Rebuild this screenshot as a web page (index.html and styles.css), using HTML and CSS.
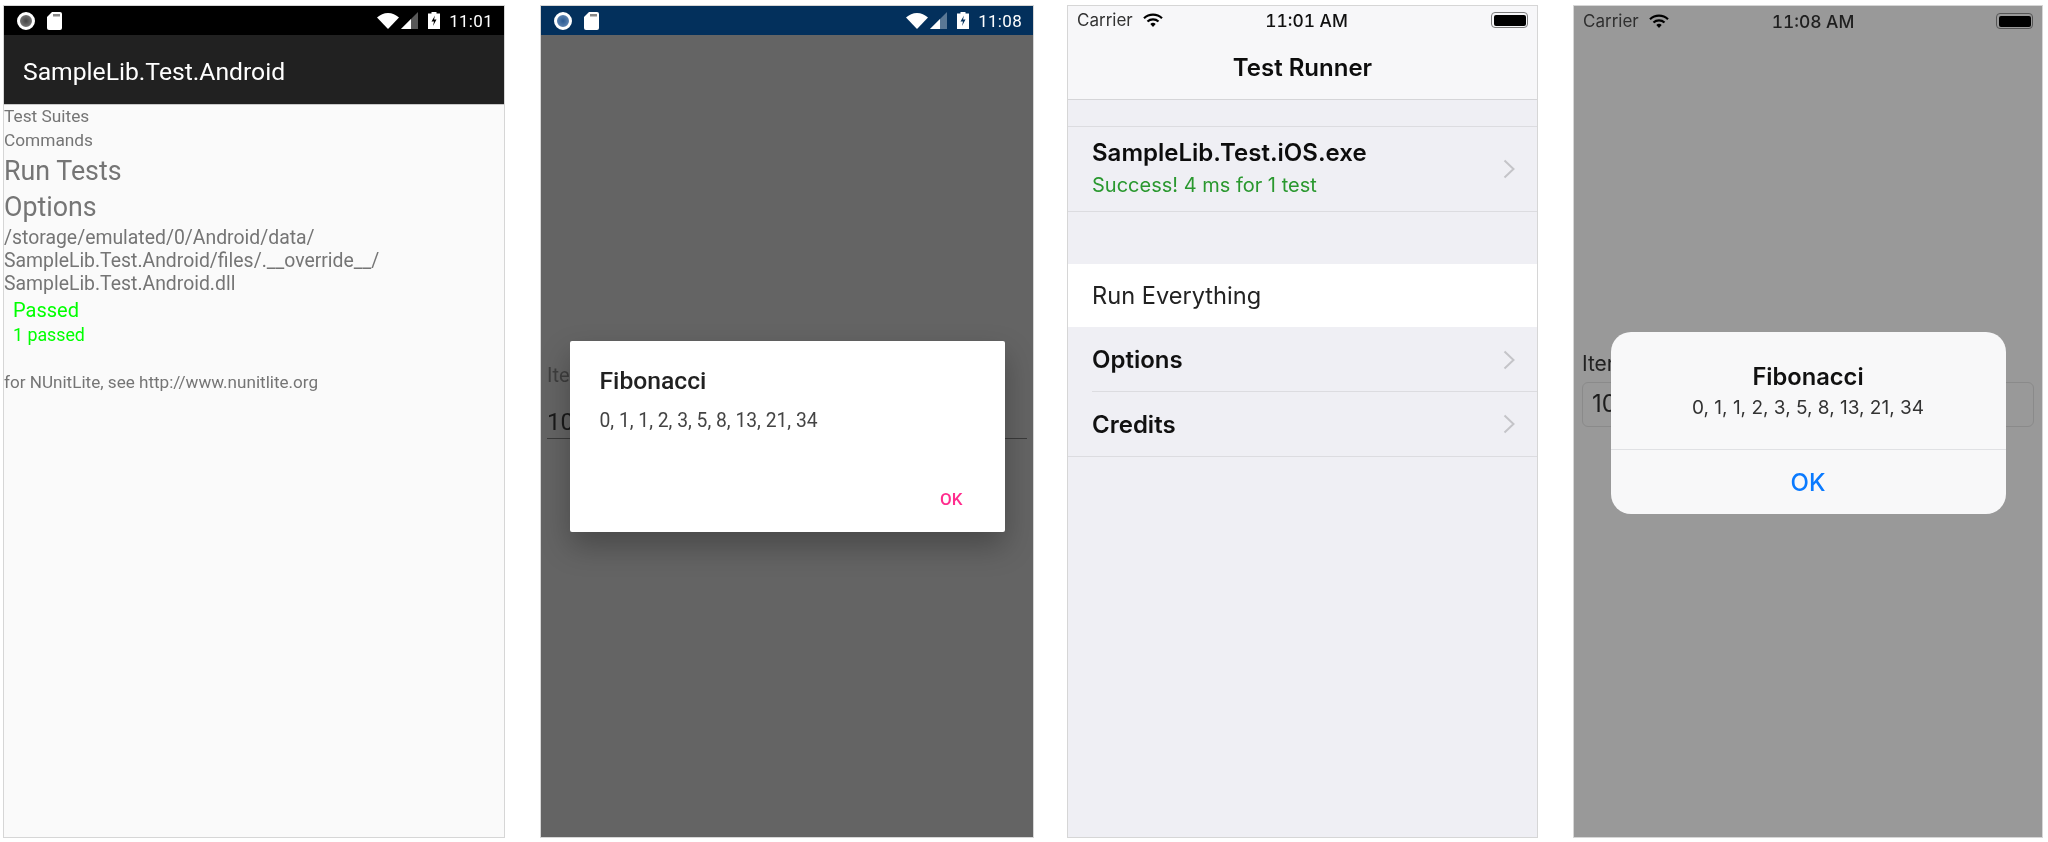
FILE: index.html
```html
<!DOCTYPE html>
<html lang="en">
<head>
<meta charset="utf-8">
<title>SampleLib test runners</title>
<link rel="stylesheet" href="styles.css">
</head>
<body>
<svg class="defs" width="0" height="0" aria-hidden="true">
  <symbol id="sd" viewBox="0 0 15 18"><path d="M5 0h8a2 2 0 0 1 2 2v14a2 2 0 0 1-2 2H2a2 2 0 0 1-2-2V5z" fill="#fff"/><rect x="6" y="2" width="7" height="2.5" fill="#888"/></symbol>
  <symbol id="wifi" viewBox="0 0 22 16"><path d="M0 4.500C3 1.800 7 0 11 0s8 1.800 11 4.500L11 16z" fill="#fff"/></symbol>
  <symbol id="signal" viewBox="0 0 17 17"><path d="M17 0v17H0z" fill="#fff" fill-opacity=".35"/><path d="M10 7v10H0z" fill="#fff"/></symbol>
  <symbol id="batt" viewBox="0 0 12 17"><path d="M3.500 0h5v1.500H12V17H0V1.500h3.500z" fill="#fff"/><path d="M7 3.500 3.500 9.500H6L5 14l3.500-6.500H6z" fill="currentColor"/></symbol>
  <symbol id="ioswifi" viewBox="0 0 20 14"><path d="M1 5.200a13 13 0 0 1 18 0" fill="none" stroke="currentColor" stroke-width="2.200"/><path d="M4.500 8.500a8 8 0 0 1 11 0" fill="none" stroke="currentColor" stroke-width="2.200"/><path d="M7.300 11a4 4 0 0 1 5.400 0L10 14z" fill="currentColor"/></symbol>
  <symbol id="chev" viewBox="0 0 12 20"><path d="M1.500 1.500 10.500 10l-9 8.500" fill="none" stroke="#c4c4c8" stroke-width="2"/></symbol>
</svg>

<main class="board">
  <section class="panel p1">
    <div class="dstatus black">
      <span class="rec grey"></span>
      <svg class="i-sd"><use href="#sd"/></svg>
      <span class="fill"></span>
      <svg class="i-wifi"><use href="#wifi"/></svg>
      <svg class="i-signal"><use href="#signal"/></svg>
      <svg class="i-batt"><use href="#batt"/></svg>
      <span class="dtime">11:01</span>
    </div>
    <header class="toolbar">SampleLib.Test.Android</header>
    <div class="log">
      <div class="small">Test Suites</div>
      <div class="small">Commands</div>
      <div class="large">Run Tests</div>
      <div class="large">Options</div>
      <div class="path">/storage/emulated/0/Android/data/<br>SampleLib.Test.Android/files/.__override__/<br>SampleLib.Test.Android.dll</div>
      <div class="passed">Passed</div>
      <div class="count">1 passed</div>
      <div class="credit">for NUnitLite, see http://www.nunitlite.org</div>
    </div>
  </section>

  <section class="panel p2">
    <div class="dstatus navy">
      <span class="rec blue"></span>
      <svg class="i-sd"><use href="#sd"/></svg>
      <span class="fill"></span>
      <svg class="i-wifi"><use href="#wifi"/></svg>
      <svg class="i-signal"><use href="#signal"/></svg>
      <svg class="i-batt"><use href="#batt"/></svg>
      <span class="dtime">11:08</span>
    </div>
    <div class="dform">
      <div class="dlabel">Items</div>
      <div class="dinput">10</div>
    </div>
    <div class="ddialog">
      <div class="ddialog-title">Fibonacci</div>
      <div class="ddialog-body">0, 1, 1, 2, 3, 5, 8, 13, 21, 34</div>
      <div class="ddialog-ok">OK</div>
    </div>
  </section>

  <section class="panel p3">
    <div class="nav">
      <div class="istatus">
        <span class="carrier">Carrier</span>
        <svg class="i-ioswifi"><use href="#ioswifi"/></svg>
        <span class="itime">11:01 AM</span>
        <span class="ibatt"><span class="ibatt-fill"></span></span>
      </div>
      <div class="navtitle">Test Runner</div>
    </div>
    <div class="group first-group">
      <div class="row suite">
        <div class="rowtext">
          <div class="suite-name">SampleLib.Test.iOS.exe</div>
          <div class="suite-result">Success! 4 ms for 1 test</div>
        </div>
        <svg class="i-chev"><use href="#chev"/></svg>
      </div>
    </div>
    <div class="group">
      <div class="row run">Run Everything</div>
      <div class="row link divided">Options<svg class="i-chev"><use href="#chev"/></svg></div>
      <div class="row link">Credits<svg class="i-chev"><use href="#chev"/></svg></div>
    </div>
  </section>

  <section class="panel p4">
    <div class="istatus dim">
      <span class="carrier">Carrier</span>
      <svg class="i-ioswifi"><use href="#ioswifi"/></svg>
      <span class="itime">11:08 AM</span>
      <span class="ibatt"><span class="ibatt-fill"></span></span>
    </div>
    <div class="iform">
      <div class="ilabel">Items</div>
      <div class="iinput">10</div>
    </div>
    <div class="idialog">
      <div class="idialog-text">
        <div class="idialog-title">Fibonacci</div>
        <div class="idialog-body">0, 1, 1, 2, 3, 5, 8, 13, 21, 34</div>
      </div>
      <div class="idialog-ok">OK</div>
    </div>
  </section>
</main>
</body>
</html>
```

FILE: styles.css
```css
* { box-sizing: border-box; }
html, body { margin: 0; height: 100%; background: #fff; overflow: hidden; }
.defs { position: absolute; }

.board {
  display: flex;
  padding: 5px 0 0 3px;
  height: 838px;
}
.panel {
  position: relative;
  flex: none;
  height: 833px;
  border: 1.500px solid #d6d6d6;
  overflow: hidden;
  filter: blur(.45px);
}
.p1 { width: 502px; background: #fafafa; font-family: Roboto, sans-serif; }
.p2 { width: 494px; margin-left: 35px; background: #646464; font-family: Roboto, sans-serif; }
.p3 { width: 471px; margin-left: 33px; background: #efeff4; font-family: Inter, sans-serif; }
.p4 { width: 470px; margin-left: 35px; background: #999; font-family: Inter, sans-serif; }

/* Android status bar */
.dstatus {
  display: flex;
  align-items: center;
  height: 29px;
  padding: 0 11px 0 12px;
}
.black { background: #000; color: #000; }
.navy { background: #03305c; color: #03305c; }
.fill { flex: 1; }
.rec {
  width: 18px;
  height: 18px;
  border-radius: 50%;
  border: 3px solid #fff;
  margin-left: 1px;
}
.grey { background: radial-gradient(circle, #444, #888); }
.blue { background: radial-gradient(circle, #2a5a92, #6f93bd); }
.i-sd { width: 15px; height: 18px; margin-left: 12px; }
.i-wifi { width: 22px; height: 16px; }
.i-signal { width: 17px; height: 17px; margin-left: 2px; }
.i-batt { width: 12px; height: 17px; margin-left: 10px; }
.dtime { color: #fff; font-size: 17px; margin-left: 9px; letter-spacing: .3px; }

/* Android app */
.toolbar {
  height: 70px;
  background: #212121;
  color: #fff;
  font-size: 24.700px;
  line-height: 73px;
  padding-left: 19px;
  border-bottom: 1.500px solid #c9c9c9;
}
.log { color: #757575; }
.small { font-size: 17.300px; line-height: 23.500px; }
.large { font-size: 26.800px; line-height: 36px; position: relative; top: 1px; }
.path { font-size: 19.400px; line-height: 23.300px; margin-top: 1.500px; }
.passed { color: #00ff00; font-size: 20px; line-height: 24px; margin: 3px 0 0 9px; }
.count { color: #00ff00; font-size: 17.800px; line-height: 26px; margin-left: 9px; }
.credit { font-size: 17.100px; line-height: 24px; margin-top: 22px; }

/* Android form behind the dialog */
.dform { padding: 327px 6px 0 6px; }
.dlabel { color: #3e3e3e; font-size: 20px; line-height: 26px; }
.dinput {
  color: #1a1a1a;
  font-size: 24px;
  line-height: 32px;
  border-bottom: 1px solid #3a3a3a;
  margin-top: 18px;
}
.ddialog {
  position: absolute;
  left: 28.500px;
  top: 334.500px;
  width: 435px;
  height: 191px;
  background: #fff;
  border-radius: 2px;
  box-shadow: 0 14px 30px rgba(0,0,0,.28);
  padding: 25px 30px 0;
}
.ddialog-title { color: #212121; font-size: 24.700px; font-weight: 500; line-height: 30px; }
.ddialog-body { color: #444; font-size: 19.300px; line-height: 24px; margin-top: 13px; }
.ddialog-ok { color: #ff2d8e; font-size: 17px; font-weight: 500; text-align: right; margin-top: 54px; padding-right: 12px; line-height: 24px; }

/* iOS status bar */
.istatus {
  position: relative;
  display: flex;
  align-items: center;
  height: 28px;
  padding: 0 9px;
  color: #000;
  font-size: 17px;
}
.carrier { color: #333; }
.i-ioswifi { width: 20px; height: 14px; margin-left: 10px; }
.itime {
  position: absolute;
  left: 8px;
  right: 0;
  text-align: center;
  font-size: 17.400px;
  font-weight: 500;
  font-variant-numeric: tabular-nums;
  color: #111;
}
.ibatt {
  margin-left: auto;
  width: 37px;
  height: 16px;
  border: 1.500px solid #7b7b7b;
  border-radius: 4px;
  padding: 1.500px;
  display: flex;
}
.ibatt-fill { flex: 1; background: #000; border-radius: 2px; }
.dim { height: 30px; }
.dim .carrier { color: #2f2f2f; }
.dim .ibatt { border-color: #555; }
.dim .itime { color: #1f1f1f; left: 10px; }

/* iOS table */
.nav { height: 94px; background: #f7f7f9; border-bottom: 1.500px solid #d5d5d8; }
.navtitle { text-align: center; font-size: 24px; font-weight: 600; line-height: 40px; margin-top: 14px; color: #0d0d0d; }
.group { display: flex; flex-direction: column; }
.first-group { margin-top: 26px; margin-bottom: 52px; border-top: 1px solid #dcdce0; border-bottom: 1px solid #dcdce0; }
.row { display: flex; align-items: center; padding-left: 24px; color: #111; }
.suite { height: 84px; }
.suite-name { font-size: 24px; font-weight: 600; line-height: 32px; color: #0d0d0d; margin-top: -3px; }
.suite-result { font-size: 20px; line-height: 28px; color: #2a982f; margin-top: 2px; }
.i-chev { width: 12px; height: 20px; margin-left: auto; margin-right: 22px; }
.run { height: 63px; background: #fff; font-size: 23.600px; color: #222; }
.link { height: 65px; font-size: 24px; font-weight: 600; color: #111; border-bottom: 1.500px solid #dcdce0; }
.divided { position: relative; border-bottom: none; }
.divided::after {
  content: "";
  position: absolute;
  left: 24px;
  right: 0;
  bottom: 0;
  height: 1.500px;
  background: #dcdce0;
}

/* iOS form behind the alert */
.iform { padding: 314px 8px 0 8px; }
.ilabel { color: #222; font-size: 21px; line-height: 28px; }
.iinput {
  height: 45px;
  margin-top: 4px;
  border: 1.500px solid #8a8a8a;
  border-radius: 6px;
  color: #1d1d1d;
  font-size: 24px;
  line-height: 42px;
  padding-left: 9px;
}
.idialog {
  position: absolute;
  left: 36.500px;
  top: 325.500px;
  width: 395px;
  height: 182px;
  background: #f8f8f9;
  border-radius: 20px;
  display: flex;
  flex-direction: column;
  text-align: center;
}
.idialog-text { height: 118px; padding-top: 29px; border-bottom: 1.500px solid #e0e1e4; }
.idialog-title { font-size: 23.700px; font-weight: 600; line-height: 32px; color: #111; }
.idialog-body { font-size: 19px; line-height: 26px; margin-top: 2px; color: #333; }
.idialog-ok { flex: 1; display: flex; align-items: center; justify-content: center; font-size: 24px; font-weight: 500; color: #0a7aff; padding-top: 2px; }
```
